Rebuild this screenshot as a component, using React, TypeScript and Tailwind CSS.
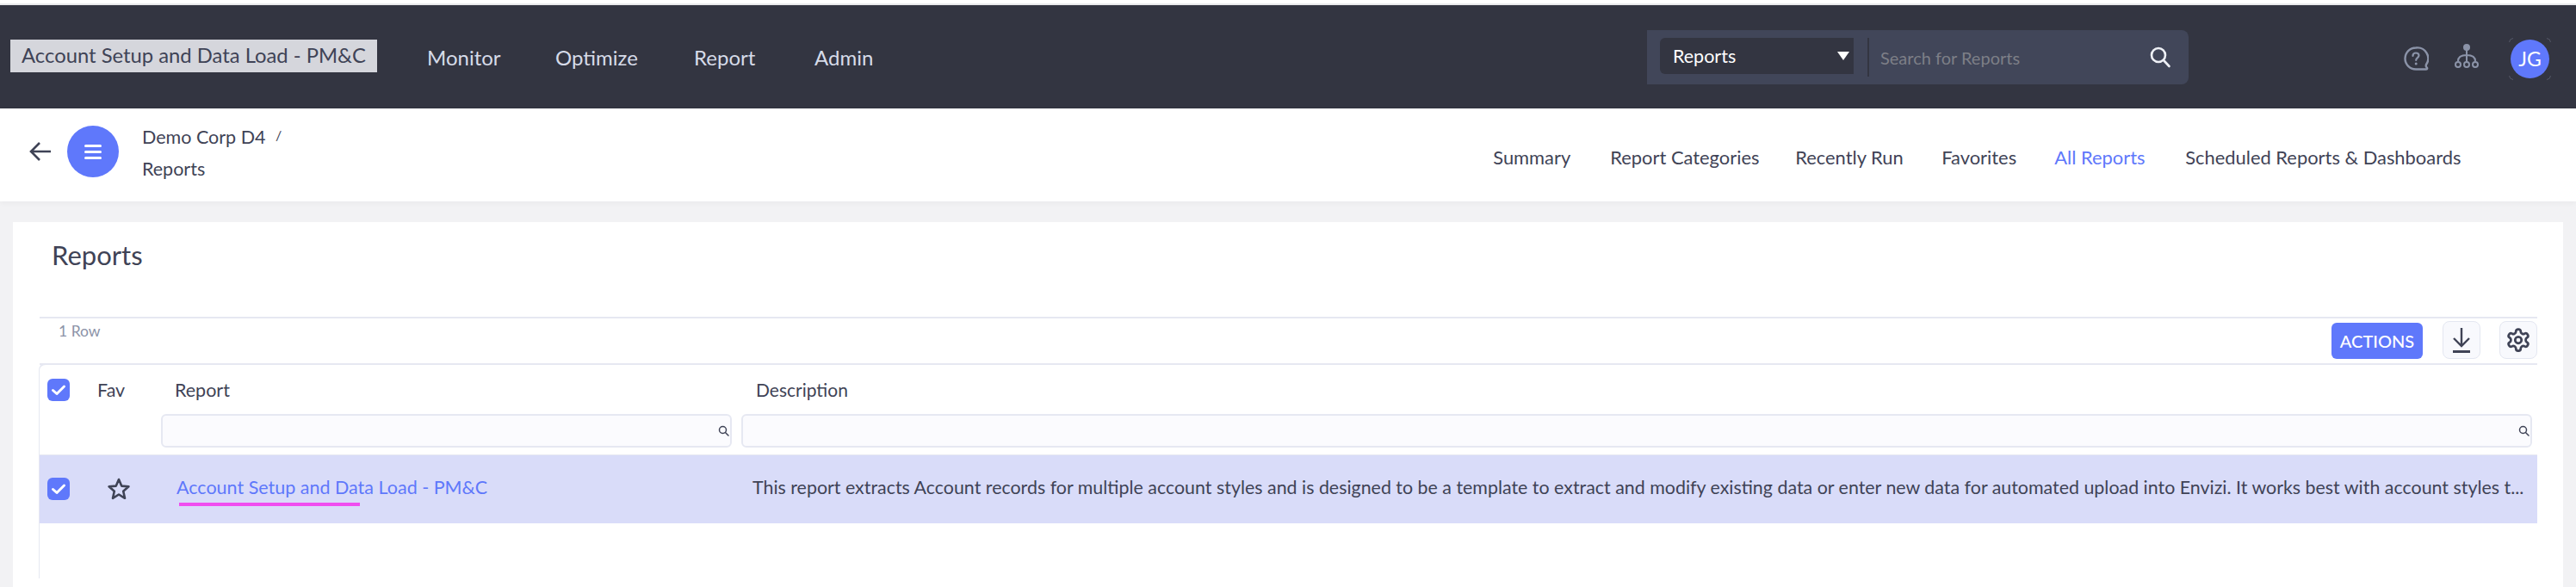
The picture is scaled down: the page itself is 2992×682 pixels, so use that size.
import React from "react";

const FONT = "font-['Lato','Noto_Sans',sans-serif]";

function Check({ className = "" }: { className?: string }) {
  return (
    <div className={`flex h-[26px] w-[26px] shrink-0 items-center justify-center rounded-[6px] bg-[#5f78fb] ${className}`}>
      <svg width="18" height="14" viewBox="0 0 18 14" fill="none">
        <path d="M2.5 7.5 L7 11.5 L15.5 3" stroke="white" strokeWidth="3" strokeLinecap="round" strokeLinejoin="round" />
      </svg>
    </div>
  );
}

function SmallSearch() {
  return (
    <svg width="13" height="13" viewBox="0 0 13 13" fill="none" stroke="#3f4356" strokeWidth="1.5">
      <circle cx="5.5" cy="5.5" r="4" />
      <path d="M8.5 8.5 L12 12" strokeLinecap="round" />
    </svg>
  );
}

function IconBtn({ children, className = "" }: { children: React.ReactNode; className?: string }) {
  return (
    <div className={`flex h-[44px] w-[44px] items-center justify-center rounded-[8px] border border-[#e4e7f1] bg-[#f8f9fd] ${className}`}>
      {children}
    </div>
  );
}

export default function App() {
  const tabs: [string, string, string][] = [
    ["Summary", "w-[136px]", "text-[#3f4356]"],
    ["Report Categories", "w-[215px]", "text-[#3f4356]"],
    ["Recently Run", "w-[170px]", "text-[#3f4356]"],
    ["Favorites", "w-[131px]", "text-[#3f4356]"],
    ["All Reports", "w-[152px]", "text-[#5f78fb]"],
    ["Scheduled Reports & Dashboards", "w-[325px]", "text-[#3f4356]"],
  ];
  const menu: [string, string][] = [
    ["Monitor", "w-[149px]"],
    ["Optimize", "w-[161px]"],
    ["Report", "w-[140px]"],
    ["Admin", "w-[80px]"],
  ];
  return (
    <div className={`${FONT} h-[682px] w-[2992px] overflow-hidden bg-[#f2f2f4]`}>
      <div className="h-[4px] bg-white" />
      <div className="h-[2px] bg-[#e9e9eb]" />
      <header className="flex h-[120px] items-center bg-[#333541]">
        <div className="ml-[12px] mt-[-2px] flex h-[38px] w-[426px] items-center justify-center whitespace-nowrap bg-[#d5d6dc] text-[23.8px] text-[#3f4356]">
          Account Setup and Data Load - PM&amp;C
        </div>
        <nav className="ml-[58px] mt-[2px] flex text-[24px] text-[#d6dbe8]">
          {menu.map(([m, w]) => (
            <span key={m} className={w}>{m}</span>
          ))}
        </nav>
        <div className="ml-[887px] mt-[1px] flex h-[63px] w-[629px] items-start rounded-r-[8px] bg-[#414659] pl-[15px] pt-[9px]">
          <div className="flex h-[42px] w-[225px] items-center justify-between rounded-l-[6px] bg-[#333541] pl-[15px] pr-[5px] text-[21.5px] text-white">
            <span>Reports</span>
            <svg width="14" height="10" viewBox="0 0 14 10"><path d="M0 0 H14 L7 10 Z" fill="white" /></svg>
          </div>
          <div className="ml-[16px] h-[45px] w-[2px] bg-[#333541]" />
          <div className="ml-[13px] mt-[11px] w-[265px] text-[20px] leading-[24px] text-[#7d7f87]">Search for Reports</div>
          <svg className="ml-[47px] mt-[9px]" width="26" height="26" viewBox="0 0 26 26" fill="none" stroke="#eef0f6" strokeWidth="2.6">
            <circle cx="11" cy="11" r="8" />
            <path d="M17 17 L23.5 24" strokeLinecap="round" />
          </svg>
        </div>
        <svg className="ml-[250px] mt-[4px]" width="29" height="29" viewBox="0 0 29 29" fill="none" stroke="#8b93a8" strokeWidth="2.4">
          <path d="M14 1.5 A12.5 12.5 0 1 0 14 26.5 H26 C27.5 26.5 27.5 25 26.5 24.2 C25.8 23.6 25.5 22.5 26 21 A12.5 12.5 0 0 0 14 1.5 Z" strokeLinejoin="round" />
          <path d="M10.5 11 C10.5 8.5 12.3 7.5 14 7.5 C16 7.5 17.5 8.8 17.5 10.6 C17.5 13 14.2 13.4 14.2 16" strokeWidth="2.2" strokeLinecap="round" />
          <circle cx="14.2" cy="20" r="1.5" fill="#8b93a8" stroke="none" />
        </svg>
        <svg className="ml-[30px] mt-[-2px]" width="28" height="28" viewBox="0 0 28 28" fill="none" stroke="#8b93a8" strokeWidth="2">
          <circle cx="14" cy="4" r="4" fill="#8b93a8" stroke="none" />
          <path d="M14 7 V21 M14 13 C7 13 4 15 4 20 M14 13 C21 13 24 15 24 20" />
          <circle cx="4" cy="24" r="3" />
          <circle cx="14" cy="24" r="3" />
          <circle cx="24" cy="24" r="3" />
        </svg>
        <div className="relative ml-[37px] mt-[5px] flex h-[45px] w-[45px] items-center justify-center rounded-full bg-[#5f78fb] text-[23px] text-white">
          JG
          <svg className="absolute -left-[2px] -top-[2px]" width="49" height="49" viewBox="0 0 49 49" fill="none" stroke="#555867" strokeWidth="1">
            <path d="M0.5 5 A5 5 0 0 1 5 0.5 M44 0.5 A5 5 0 0 1 48.5 5 M48.5 44 A5 5 0 0 1 44 48.5 M5 48.5 A5 5 0 0 1 0.5 44" />
          </svg>
        </div>
      </header>

      <div className="flex h-[108px] items-start bg-white shadow-[0_2px_6px_rgba(0,0,0,0.04)]">
        <svg className="ml-[34px] mt-[38px]" width="26" height="24" viewBox="0 0 26 24" fill="none" stroke="#3f4356" strokeWidth="2.6">
          <path d="M25 12 H2 M12 2 L2 12 L12 22" />
        </svg>
        <div className="ml-[18px] mt-[20px] flex h-[60px] w-[60px] flex-col items-center justify-center gap-[4px] rounded-full bg-[#5f78fb]">
          <div className="h-[3px] w-[20px] rounded bg-white" />
          <div className="h-[3px] w-[20px] rounded bg-white" />
          <div className="h-[3px] w-[20px] rounded bg-white" />
        </div>
        <div className="ml-[27px] mt-[20px] text-[21.5px] leading-[26px] text-[#3f4356]">
          <div className="flex">
            <span className="w-[155px]">Demo Corp D4</span>
            <span className="-mt-[2px] text-[16px]">/</span>
          </div>
          <div className="mt-[11px]">Reports</div>
        </div>
        <nav className="ml-[1407px] mt-[44px] flex text-[21.9px] leading-[26px]">
          {tabs.map(([t, w, c]) => (
            <span key={t} className={`${w} ${c} whitespace-nowrap`}>{t}</span>
          ))}
        </nav>
      </div>

      <main className="ml-[15px] mr-[15px] mt-[24px] h-[424px] bg-white pl-[31px] pr-[30px]">
        <h1 className="pl-[14px] pt-[18px] text-[31px] font-normal leading-[40px] text-[#3f4356]">Reports</h1>
        <div className="mt-[52px] flex h-[56px] items-start border-y-[2px] border-[#e6e8f2] pl-[22px]">
          <span className="mt-[3px] text-[17.5px] leading-[24px] text-[#8c93a8]">1 Row</span>
          <div className="ml-auto mt-[5px] flex h-[42px] w-[106px] items-center justify-center rounded-[6px] bg-[#5f78fb] text-[20px] font-medium text-white">ACTIONS</div>
          <IconBtn className="ml-[23px] mt-[3px]">
            <svg width="24" height="30" viewBox="0 0 24 30" fill="none" stroke="#3f4356" strokeWidth="2.4">
              <path d="M12 1 V22 M3 13 L12 22 L21 13" />
              <path d="M2 28.5 H22" strokeWidth="3" />
            </svg>
          </IconBtn>
          <IconBtn className="ml-[22px] mt-[3px]">
            <svg width="30" height="30" viewBox="0 0 24 24" fill="none" stroke="#3f4356" strokeWidth="2.2" strokeLinecap="round" strokeLinejoin="round">
              <path d="M12.22 2h-.44a2 2 0 0 0-2 2v.18a2 2 0 0 1-1 1.73l-.43.25a2 2 0 0 1-2 0l-.15-.08a2 2 0 0 0-2.73.73l-.22.38a2 2 0 0 0 .73 2.73l.15.1a2 2 0 0 1 1 1.72v.51a2 2 0 0 1-1 1.74l-.15.09a2 2 0 0 0-.73 2.73l.22.38a2 2 0 0 0 2.73.73l.15-.08a2 2 0 0 1 2 0l.43.25a2 2 0 0 1 1 1.73V20a2 2 0 0 0 2 2h.44a2 2 0 0 0 2-2v-.18a2 2 0 0 1 1-1.73l.43-.25a2 2 0 0 1 2 0l.15.08a2 2 0 0 0 2.73-.73l.22-.39a2 2 0 0 0-.73-2.73l-.15-.08a2 2 0 0 1-1-1.74v-.5a2 2 0 0 1 1-1.74l.15-.09a2 2 0 0 0 .73-2.73l-.22-.38a2 2 0 0 0-2.73-.73l-.15.08a2 2 0 0 1-2 0l-.43-.25a2 2 0 0 1-1-1.73V4a2 2 0 0 0-2-2z" />
              <circle cx="12" cy="12" r="3" />
            </svg>
          </IconBtn>
        </div>

        <div className="-ml-px -mt-[2px] h-[250px] rounded-tl-[8px] border-l border-t-[2px] border-[#e6e8f2]">
          <div className="h-[105px] border-b border-[#e6e8f2]">
            <div className="flex h-[57px] items-center text-[21.5px] leading-[26px] text-[#3f4356]">
              <Check className="ml-[9px]" />
              <span className="ml-[32px] w-[90px]">Fav</span>
              <span className="w-[675px]">Report</span>
              <span className="text-[21px]">Description</span>
            </div>
            <div className="flex pl-[141px] pr-[6px]">
              <div className="flex h-[39px] w-[663px] items-center justify-end rounded-[6px] border-[2px] border-[#e6e8f2] bg-[#fbfbfe] pr-[1px]">
                <SmallSearch />
              </div>
              <div className="ml-[11px] flex h-[39px] flex-1 items-center justify-end rounded-[6px] border-[2px] border-[#e6e8f2] bg-[#fbfbfe] pr-[1px]">
                <SmallSearch />
              </div>
            </div>
          </div>
          <div className="flex h-[79px] items-center bg-[#d9dcf9] text-[21.5px] text-[#3f4356]">
            <Check className="ml-[9px] -mt-[2px]" />
            <svg className="ml-[44px] -mt-[2px] shrink-0" width="26" height="26" viewBox="0 0 26 26" fill="none" stroke="#3f4356" strokeWidth="2.6" strokeLinejoin="round">
              <path d="M13 2 L16.2 9.6 L24.4 10.3 L18.2 15.7 L20 23.8 L13 19.5 L6 23.8 L7.8 15.7 L1.6 10.3 L9.8 9.6 Z" />
            </svg>
            <div className="relative ml-[54px] w-[669px] shrink-0 -mt-[4px] whitespace-nowrap text-[#5f78fb]">
              Account Setup and Data Load - PM&amp;C
              <div className="absolute left-[3px] top-[34px] h-[4px] w-[210px] bg-[#f04ef0]" />
            </div>
            <div className="-mt-[4px] whitespace-nowrap text-[21.4px]">
              This report extracts Account records for multiple account styles and is designed to be a template to extract and modify existing data or enter new data for automated upload into Envizi. It works best with account styles t...
            </div>
          </div>
        </div>
      </main>
    </div>
  );
}
